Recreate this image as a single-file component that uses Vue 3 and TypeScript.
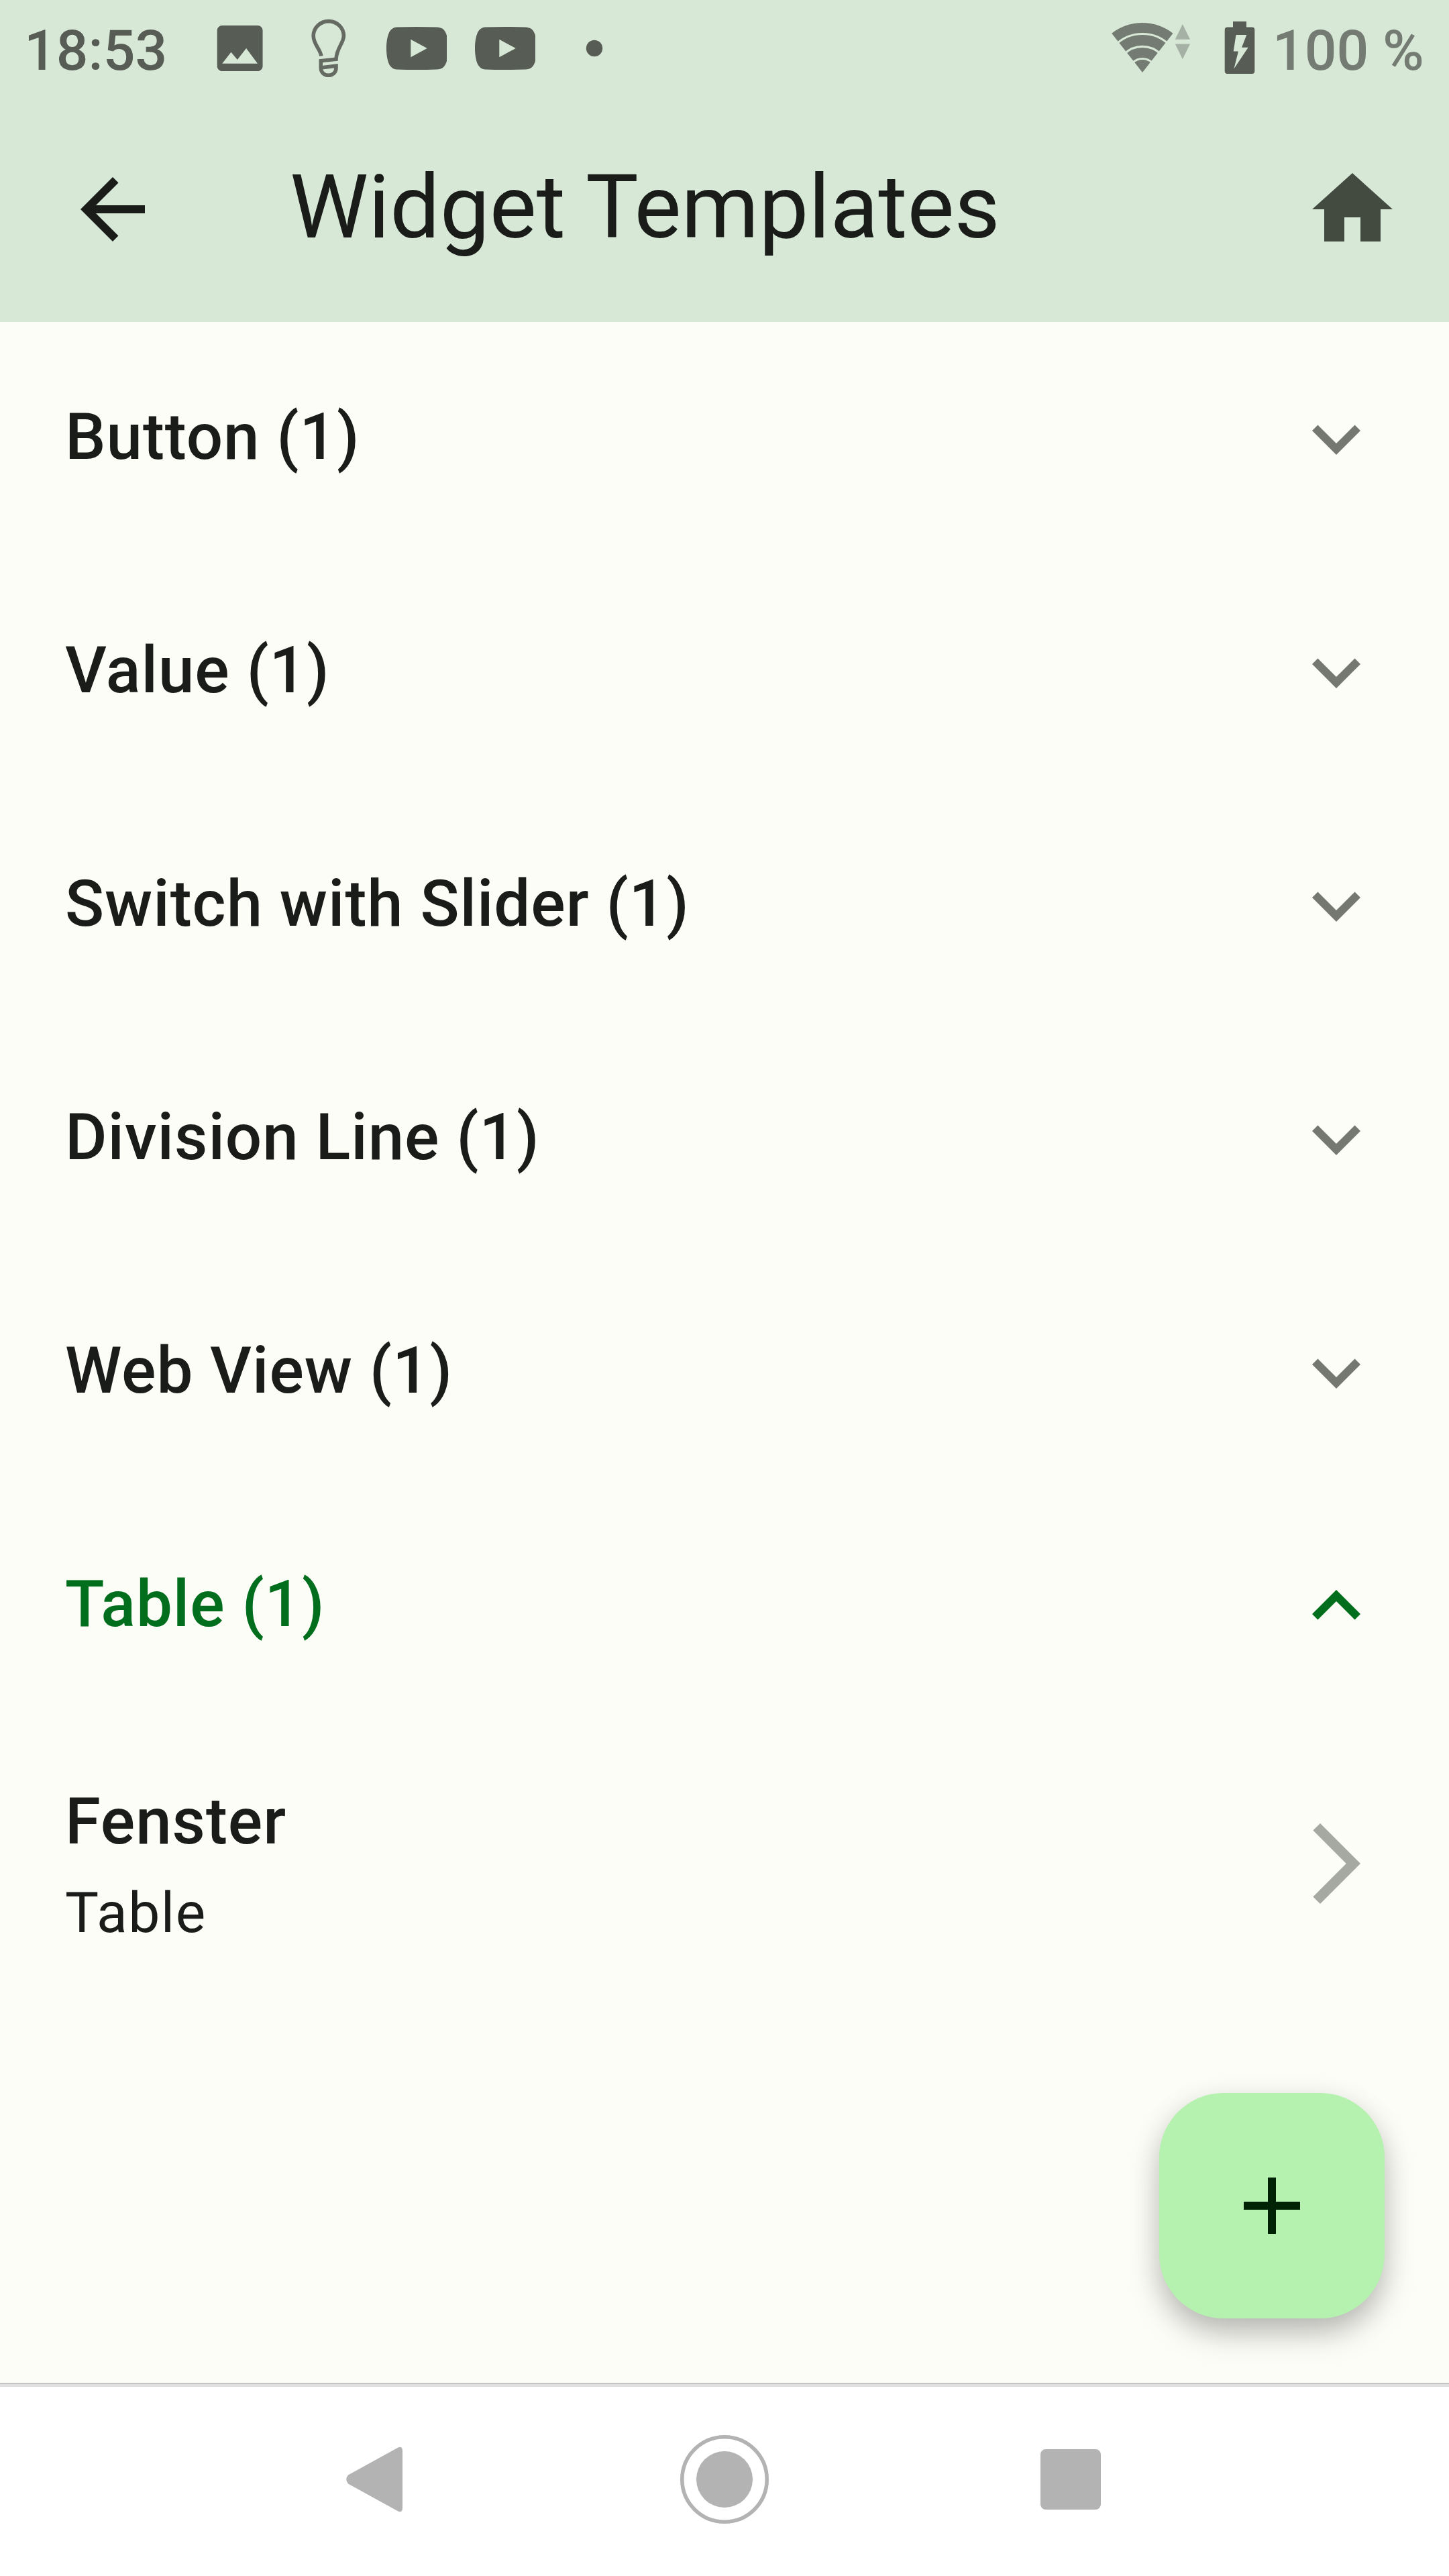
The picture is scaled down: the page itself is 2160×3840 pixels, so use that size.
<script setup lang="ts">
import { ref } from 'vue'

interface Template {
  name: string
  type: string
}

interface Group {
  type: string
  templates: Template[]
}

const groups: Group[] = [
  { type: 'Button', templates: [{ name: 'Taste', type: 'Button' }] },
  { type: 'Value', templates: [{ name: 'Wert', type: 'Value' }] },
  { type: 'Switch with Slider', templates: [{ name: 'Licht', type: 'Switch with Slider' }] },
  { type: 'Division Line', templates: [{ name: 'Linie', type: 'Division Line' }] },
  { type: 'Web View', templates: [{ name: 'Web', type: 'Web View' }] },
  { type: 'Table', templates: [{ name: 'Fenster', type: 'Table' }] },
]

const open = ref('Table')

function toggle(type: string): void {
  open.value = open.value === type ? '' : type
}
</script>

<template>
  <div class="screen">
    <header class="top">
      <div class="status">
        <span class="clock">18:53</span>
        <div class="notifications">
          <svg class="note" viewBox="0 0 90 144">
            <path transform="translate(.4 26.8) scale(3.77)" d="M21 19V5c0-1.1-.9-2-2-2H5c-1.1 0-2 .9-2 2v14c0 1.1.9 2 2 2h14c1.1 0 2-.9 2-2zM8.5 13.5l2.5 3.01L14.5 12l4.5 6H5l3.5-4.5z" />
          </svg>
          <svg class="note" viewBox="444 0 90 144">
            <path class="outline" d="M478.8 83.5C478 74 467.2 66 467.2 53.500A22.500 21.800 0 0 1 512.400 53.500C512.400 64 501.500 72 501 88.300L478.300 90.800V101.500C478.300 108 483.500 112.300 489.600 112.300S501 108 501 101.500V98.200L478.300 101" />
          </svg>
          <svg v-for="n in 2" :key="n" class="note" viewBox="0 0 90 144">
            <path d="M0 72C0 61 2 51 5.500 46Q9 41 15 40.500Q45 39.500 75 40.500Q81 41 84 43Q88 46 90 53V91Q88 98 84 101Q81 103 75 103.500Q45 104.500 15 103.500Q9 103 5.500 98C2 93 0 83 0 72zM36.300 58.700V85.300L60.700 72z" />
          </svg>
          <svg class="note" viewBox="0 0 90 144"><circle cx="46" cy="72" r="12.200" /></svg>
        </div>
        <div class="system">
          <svg class="wifi" viewBox="1656 0 120 144">
            <path d="M1703 108L1657.200 49.700A74.200 74.200 0 0 1 1748.500 49.700z" />
            <g class="gaps">
              <circle cx="1703" cy="108" r="57.500" />
              <circle cx="1703" cy="108" r="38.700" />
              <circle cx="1703" cy="108" r="20.500" />
            </g>
            <path class="traffic" d="M1762.900 36L1774 58.700H1751.800zM1762.900 88.300L1774 65.600H1751.800z" />
          </svg>
          <svg class="battery" viewBox="1825 0 46 144">
            <path d="M1838 32H1858V40.500H1866.300Q1870.300 40.500 1870.300 44.500V106Q1870.300 110 1866.300 110H1829.700Q1825.700 110 1825.700 106V44.500Q1825.700 40.500 1829.700 40.500H1838zM1842.500 52L1838.700 76.500H1846L1839.400 102.500L1860.700 70.800H1851L1858.300 52z" />
          </svg>
          <span class="percent">100 %</span>
        </div>
      </div>
      <div class="appbar">
        <svg class="icon ink" viewBox="0 0 24 24"><path d="M20 11H7.830l5.590-5.590L12 4l-8 8 8 8 1.410-1.410L7.830 13H20v-2z" /></svg>
        <h1>Widget Templates</h1>
        <svg class="icon home" viewBox="0 0 24 24"><path d="M10 20v-6h4v6h5v-8h3L12 3 2 12h3v8z" /></svg>
      </div>
    </header>

    <main>
      <section v-for="group in groups" :key="group.type">
        <div class="group" :class="{ open: open === group.type }" @click="toggle(group.type)">
          <span>{{ group.type }} ({{ group.templates.length }})</span>
          <svg class="icon chevron" viewBox="0 0 24 24"><path d="M16.590 8.590L12 13.170 7.410 8.590 6 10l6 6 6-6z" /></svg>
        </div>
        <template v-if="open === group.type">
          <div v-for="item in group.templates" :key="item.name" class="item">
            <div class="labels">
              <span class="name">{{ item.name }}</span>
              <span class="type">{{ item.type }}</span>
            </div>
            <svg class="icon forward" viewBox="0 0 24 24"><path d="M6.230 20.230L8 22l10-10L8 2 6.230 3.770 14.460 12z" /></svg>
          </div>
        </template>
      </section>
      <button class="fab" aria-label="Add">
        <svg class="icon" viewBox="0 0 24 24"><path d="M19 13h-6v6h-2v-6H5v-2h6V5h2v6h6v2z" /></svg>
      </button>
    </main>

    <nav>
      <svg viewBox="492 3624 144 144"><path d="M519 3689.500L592.500 3649Q600 3645 600 3654V3738Q600 3747 592.500 3743L519 3702.500Q513.500 3696 519 3689.500z" /></svg>
      <svg viewBox="0 0 144 144">
        <circle class="ring" cx="72" cy="72" r="63.200" />
        <circle cx="72" cy="72" r="42" />
      </svg>
      <svg viewBox="0 0 144 144"><rect x="27" y="27" width="90" height="90" rx="8" /></svg>
    </nav>
  </div>
</template>

<style>
body {
  margin: 0;
}
</style>

<style scoped>
.screen {
  display: flex;
  flex-direction: column;
  width: 2160px;
  height: 3840px;
  overflow: hidden;
  background: #fcfdf7;
  color: #1a1c19;
  font-family: Roboto, "Liberation Sans", sans-serif;
}

.top {
  height: 480px;
  background: #d7e8d6;
}

.status {
  display: flex;
  height: 144px;
  box-sizing: border-box;
  padding: 0 36px;
  fill: #575c55;
  color: #575c55;
  font-size: 84px;
  font-weight: 500;
  line-height: 151px;
  white-space: pre;
}

.clock {
  width: 276px;
}

.notifications {
  display: flex;
  gap: 42px;
}

.note {
  width: 90px;
  height: 144px;
}

.outline {
  fill: none;
  stroke: #656b63;
  stroke-width: 5.6;
}

.system {
  display: flex;
  margin-left: auto;
}

.wifi {
  width: 120px;
  height: 144px;
  margin-right: 49px;
  fill: #737b72;
}

.gaps {
  fill: none;
  stroke: #d7e8d6;
  stroke-width: 3.2;
}

.traffic {
  fill: #a5b1a4;
}

.battery {
  width: 46px;
  height: 144px;
  margin-right: 26px;
}

.percent {
  width: 227px;
  color: #737b72;
}

.appbar {
  display: flex;
  align-items: center;
  height: 336px;
  box-sizing: border-box;
  padding: 0 72px 0 96px;
}

.icon {
  display: block;
  flex: none;
  width: 144px;
  height: 144px;
}

.ink {
  fill: #1a1c19;
}

.home {
  fill: #434b41;
}

h1 {
  flex: 1;
  margin: -6px 0 0 192px;
  font-size: 132px;
  font-weight: 400;
  line-height: 168px;
}

main {
  position: relative;
  flex: 1;
}

.group,
.item {
  display: flex;
  align-items: center;
  justify-content: space-between;
  box-sizing: border-box;
  padding: 0 96px 0 97px;
}

.group {
  height: 348px;
  font-size: 96px;
  font-weight: 500;
  letter-spacing: 0.95px;
  line-height: 144px;
}

.group span {
  margin-top: -6px;
}

.chevron {
  fill: #757771;
}

.open {
  color: #006e1c;
}

.open .chevron {
  fill: #006e1c;
  transform: rotate(180deg);
}

.item {
  height: 420px;
}

.labels {
  display: flex;
  flex-direction: column;
  gap: 4px;
  margin-top: -1px;
}

.name {
  font-size: 96px;
  font-weight: 500;
  letter-spacing: 0.95px;
  line-height: 144px;
}

.type {
  font-size: 84px;
  letter-spacing: 1.5px;
  line-height: 121px;
}

.forward {
  fill: #a6a9a2;
}

.fab {
  position: absolute;
  right: 96px;
  bottom: 96px;
  display: grid;
  place-items: center;
  width: 336px;
  height: 336px;
  padding: 0;
  border: 0;
  border-radius: 96px;
  background: #b5f2b0;
  fill: #002204;
  box-shadow: 0 24px 48px -4px rgba(0, 0, 0, 0.25), 0 8px 44px rgba(0, 0, 0, 0.08);
}

nav {
  display: flex;
  justify-content: center;
  align-items: center;
  gap: 372px;
  height: 288px;
  box-shadow: inset 0 1px 0 #a3a49f, inset 0 6px 0 #e0e0e0;
  background: #fff;
  fill: #b3b3b3;
}

nav svg {
  width: 144px;
  height: 144px;
}

.ring {
  fill: none;
  stroke: #b3b3b3;
  stroke-width: 5.6;
}
</style>
